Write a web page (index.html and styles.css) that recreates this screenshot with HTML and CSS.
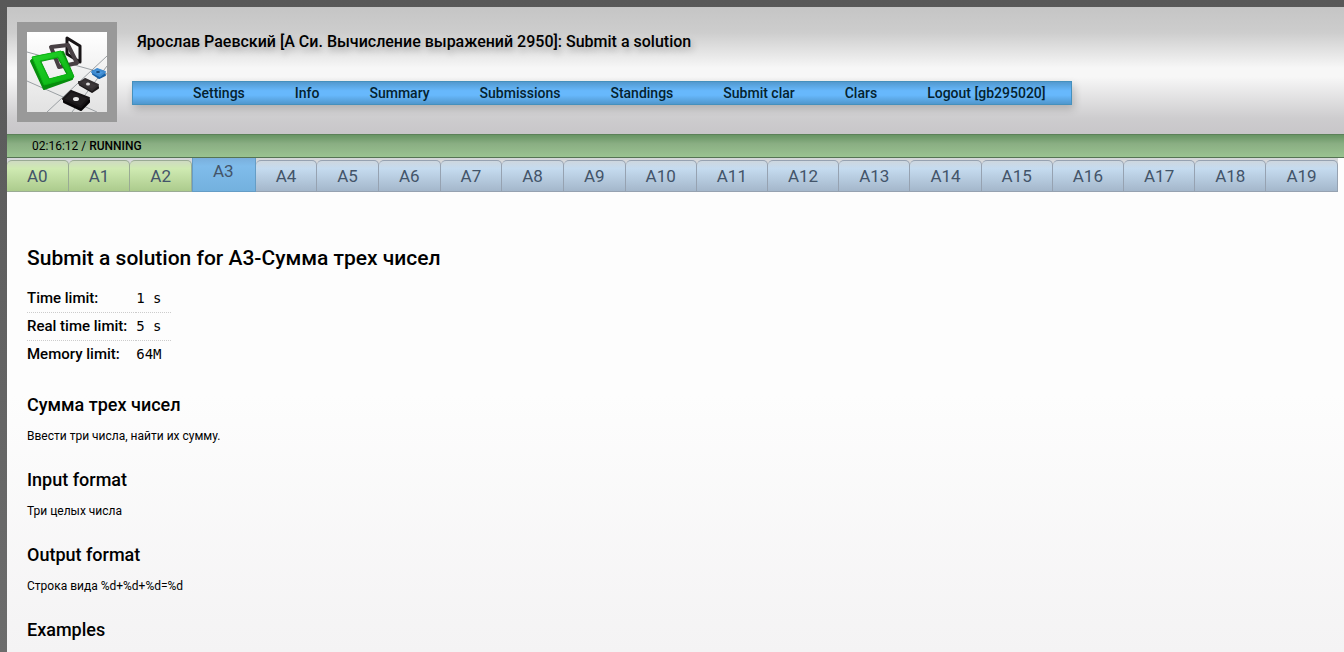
FILE: index.html
```html
<!DOCTYPE html>
<html lang="ru">
<head>
<meta charset="utf-8">
<title>Submit a solution</title>
<link rel="stylesheet" href="styles.css">
</head>
<body>
<div class="page">
  <header class="header">
    <a class="logo" href="#" aria-label="Home">
      <svg viewBox="0 0 80 80" aria-hidden="true">
        <defs>
          <linearGradient id="floor" x1="0" y1="0" x2="0" y2="1"><stop offset="0" stop-color="#fff"/><stop offset="1" stop-color="#e2e2e2"/></linearGradient>
          <linearGradient id="green" x1="0" y1="0" x2="1" y2="1"><stop offset="0" stop-color="#25d52b"/><stop offset="1" stop-color="#08b010"/></linearGradient>
        </defs>
        <path fill="url(#floor)" d="M0 0h80v80H0z"/>
        <g fill="none" stroke="#9a9fa3" stroke-width="1"><path d="M0 20l80 22M0 49l70 31M80 24L20 80M80 34L45 80"/></g>
        <path fill="none" stroke="#181416" stroke-width="3" stroke-linejoin="round" d="M40 6l13 8v16l-13-8z"/>
        <path fill="none" stroke="#484044" stroke-width="4" stroke-linejoin="round" d="M24 15l17-2 9 18-18 4z"/>
        <path fill="#078d0d" stroke="#078d0d" stroke-width="2" stroke-linejoin="round" fill-rule="evenodd" d="M4 29l4-4 28-5 10 24-1 3-28 10zM13 29l9 19 19-5-10-18z"/>
        <path fill="url(#green)" stroke="#0cb514" stroke-width="1" stroke-linejoin="round" fill-rule="evenodd" d="M5 25l29-6 13 26-30 8zM13 29l9 18 19-5-10-17z"/>
        <path fill="#1760a5" stroke="#1760a5" stroke-width="2" stroke-linejoin="round" d="M66 39l11 3 1 1-6 3-6-4z"/>
        <path fill="#4a9ae2" stroke="#3f8bd0" stroke-width="2" stroke-linejoin="round" d="M70 37l8 3-5 4-8-4z"/>
        <ellipse cx="71" cy="40" rx="2" ry="1" fill="#194a7a"/>
        <path fill="#1c191a" stroke="#1c191a" stroke-width="2" stroke-linejoin="round" d="M52 50l19 5v1l-6 4-12-7z"/>
        <path fill="#3e393b" stroke="#343032" stroke-width="2" stroke-linejoin="round" d="M58 47l13 6-6 5-13-7z"/>
        <ellipse cx="61" cy="52" rx="2" ry="1.500" fill="#ddd"/>
        <path fill="#080608" stroke="#080608" stroke-width="2" stroke-linejoin="round" d="M37 67l25 1v2l-8 8-17-8z"/>
        <path fill="#211e20" stroke="#171416" stroke-width="2" stroke-linejoin="round" d="M44 59l18 7-8 9-18-8z"/>
        <ellipse cx="49" cy="67" rx="3" ry="2" fill="#e8e8e8"/>
      </svg>
    </a>
    <div class="heading">
      <h1 class="title">Ярослав Раевский [А Си. Вычисление выражений 2950]: Submit a solution</h1>
      <nav class="menu">
        <a href="#">Settings</a>
        <a href="#">Info</a>
        <a href="#">Summary</a>
        <a href="#">Submissions</a>
        <a href="#">Standings</a>
        <a href="#">Submit clar</a>
        <a href="#">Clars</a>
        <a href="#">Logout [gb295020]</a>
      </nav>
    </div>
  </header>
  <div class="status"><span>02:16:12</span> / <b>RUNNING</b></div>
  <nav class="tabs">
    <a class="tab solved" href="#">A0</a>
    <a class="tab solved" href="#">A1</a>
    <a class="tab solved" href="#">A2</a>
    <a class="tab current" href="#" aria-current="page">A3</a>
    <a class="tab" href="#">A4</a>
    <a class="tab" href="#">A5</a>
    <a class="tab" href="#">A6</a>
    <a class="tab" href="#">A7</a>
    <a class="tab" href="#">A8</a>
    <a class="tab" href="#">A9</a>
    <a class="tab" href="#">A10</a>
    <a class="tab" href="#">A11</a>
    <a class="tab" href="#">A12</a>
    <a class="tab" href="#">A13</a>
    <a class="tab" href="#">A14</a>
    <a class="tab" href="#">A15</a>
    <a class="tab" href="#">A16</a>
    <a class="tab" href="#">A17</a>
    <a class="tab" href="#">A18</a>
    <a class="tab" href="#">A19</a>
  </nav>
  <main class="content">
    <h2 class="problem-title">Submit a solution for A3-Сумма трех чисел</h2>
    <table class="limits">
      <tr><th scope="row">Time limit:</th><td>1 s</td></tr>
      <tr><th scope="row">Real time limit:</th><td>5 s</td></tr>
      <tr><th scope="row">Memory limit:</th><td>64M</td></tr>
    </table>
    <section class="part"><h3>Сумма трех чисел</h3><p>Ввести три числа, найти их сумму.</p></section>
    <section class="part"><h3>Input format</h3><p>Три целых числа</p></section>
    <section class="part"><h3>Output format</h3><p>Строка вида %d+%d+%d=%d</p></section>
    <section class="part"><h3>Examples</h3></section>
  </main>
</div>
</body>
</html>
```
FILE: styles.css
```css
* {
  box-sizing: border-box;
}

body {
  margin: 0;
  padding: 7px 0 0 7px;
  height: 100vh;
  overflow: hidden;
  background: linear-gradient(#585858, #6c6c6c);
  color: #000;
  font-family: Roboto, "Liberation Sans", sans-serif;
  font-size: 12px;
}

a {
  color: inherit;
  text-decoration: none;
}

.page {
  min-height: 100%;
  background: linear-gradient(#fdfdfd 0, #fdfdfd 60%, #f4f3f4 100%);
}

.header {
  display: flex;
  gap: 15px;
  padding: 15px 10px 12px;
  background: linear-gradient(#c5c5c5 0%, #cdcdcd 20%, #f7f7f7 48%, #f7f7f7 55%, #cdccce 88%, #c8c6c9 100%);
}

.logo {
  flex: none;
  width: 100px;
  height: 100px;
  padding: 10px;
  background: #999;
}

.logo svg {
  display: block;
}

.title {
  margin: 0;
  padding: 10px 5px 0;
  font-size: 16px;
  font-weight: 500;
  line-height: 20px;
  text-shadow: 2px 4px 6px rgba(0, 0, 0, 0.25);
}

.menu {
  display: flex;
  margin-top: 29px;
  padding: 0 0 0 35px;
  border: 1px solid #4590bd;
  background: linear-gradient(#5299cf, #67b8fc 40%, #67b8fc 60%, #5097cd);
  box-shadow: 2px 4px 8px rgba(0, 0, 0, 0.2);
  color: #04222f;
  font-size: 14px;
  font-weight: 500;
  line-height: 22px;
}

.menu a {
  padding: 0 25px;
}

.status {
  height: 24px;
  padding: 0 25px;
  border-top: 1px solid #5c8159;
  border-bottom: 1px solid #557353;
  background: linear-gradient(#679463, #8aae83 40%, #9ac390);
  line-height: 22px;
}

.status b {
  font-weight: 500;
}

.tabs {
  display: flex;
  align-items: flex-end;
  width: max-content;
  height: 34px;
  background: linear-gradient(#d5d7d9, #dedede);
  color: #435469;
  font-size: 17px;
}

.tab {
  height: 32px;
  padding: 0 20px;
  border: solid #96a2b1;
  border-width: 1px 1px 1px 0;
  border-radius: 5px 5px 0 0;
  background: linear-gradient(#ced7df 0, #c5dbef 25%, #a4b7cb 100%);
  line-height: 31px;
}

.solved {
  border-color: #9aab94;
  background: linear-gradient(#cfdbc2 0, #cfeab2 25%, #accb8d 100%);
}

.current {
  height: 34px;
  padding: 0 21px 0 20px;
  border: solid #659dc6;
  border-width: 0 1px 1px;
  border-radius: 0;
  background: linear-gradient(#7aafdc, #80bceb 25%, #73b1de);
  line-height: 26px;
}

.content {
  padding: 52px 20px 0;
}

.problem-title {
  margin: 0 0 12px;
  font-size: 21px;
  font-weight: 500;
  line-height: 28px;
}

.limits {
  margin-bottom: 24px;
  border-collapse: collapse;
}

.limits th,
.limits td {
  height: 28px;
  padding: 0 9px 0 0;
  border-bottom: 1px dotted #ccc;
  text-align: left;
}

.limits tr:last-child > * {
  border-bottom: 0;
}

.limits th {
  font-size: 15px;
  font-weight: 500;
}

.limits td {
  font-family: "DejaVu Sans Mono", monospace;
  font-size: 14px;
}

.part {
  margin-bottom: 23px;
}

.part h3 {
  margin: 0 0 10px;
  font-size: 18px;
  font-weight: 500;
  line-height: 26px;
}

.part p {
  margin: 0;
  line-height: 16px;
}
```
